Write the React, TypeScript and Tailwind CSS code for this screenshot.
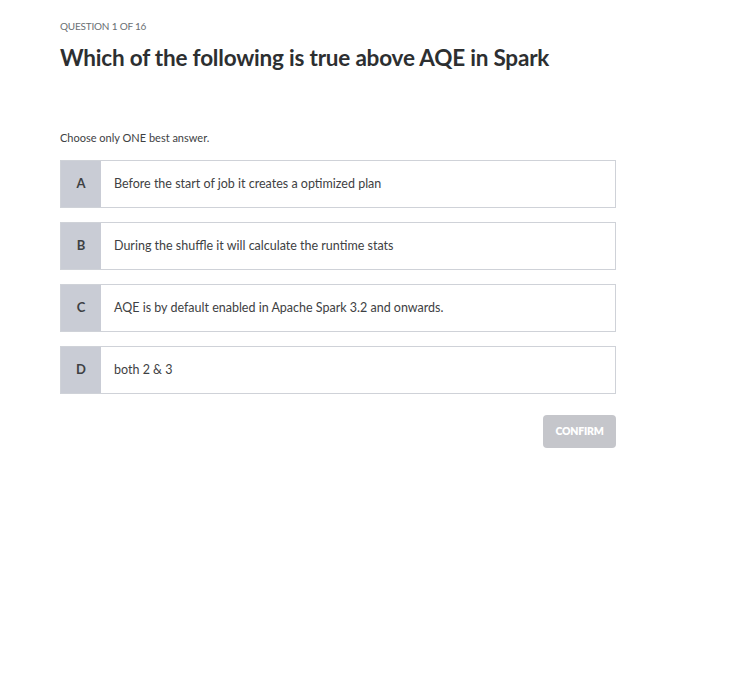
const options = [
  { key: 'A', text: 'Before the start of job it creates a optimized plan' },
  { key: 'B', text: 'During the shuffle it will calculate the runtime stats' },
  { key: 'C', text: 'AQE is by default enabled in Apache Spark 3.2 and onwards.' },
  { key: 'D', text: 'both 2 & 3' },
];

export default function App() {
  return (
    <div className="min-h-screen bg-white font-['Lato',sans-serif] text-[#3e4143]">
      <div className="w-[556px] ml-[60px] pt-[19px]">
        <div className="text-[10px] leading-[14px] tracking-[-0.2px] text-[#6a6f73] uppercase">Question 1 of 16</div>
        <h1 className="mt-[9px] text-[22.5px] leading-[32px] font-bold text-[#2d2f31] tracking-[-0.2px]">
          Which of the following is true above AQE in Spark
        </h1>
        <p className="mt-[56px] text-[11px] leading-[16px] text-[#3e4143]">Choose only ONE best answer.</p>
        <div className="mt-[14px] flex flex-col gap-[14px]">
          {options.map((o) => (
            <div key={o.key} className="flex h-[48px] border border-[#cfd2d8] bg-white">
              <div className="w-[40px] bg-[#c9ccd5] flex items-center justify-center text-[13px] font-bold text-[#3e4143]">
                {o.key}
              </div>
              <div className="flex items-center pl-[13px] text-[12.5px] text-[#3e4143]">{o.text}</div>
            </div>
          ))}
        </div>
        <div className="mt-[21px] flex justify-end">
          <button className="w-[73px] h-[33px] rounded-[4px] bg-[#c5c6cb] text-white text-[10.5px] font-extrabold tracking-[-0.2px]">
            CONFIRM
          </button>
        </div>
      </div>
    </div>
  );
}
